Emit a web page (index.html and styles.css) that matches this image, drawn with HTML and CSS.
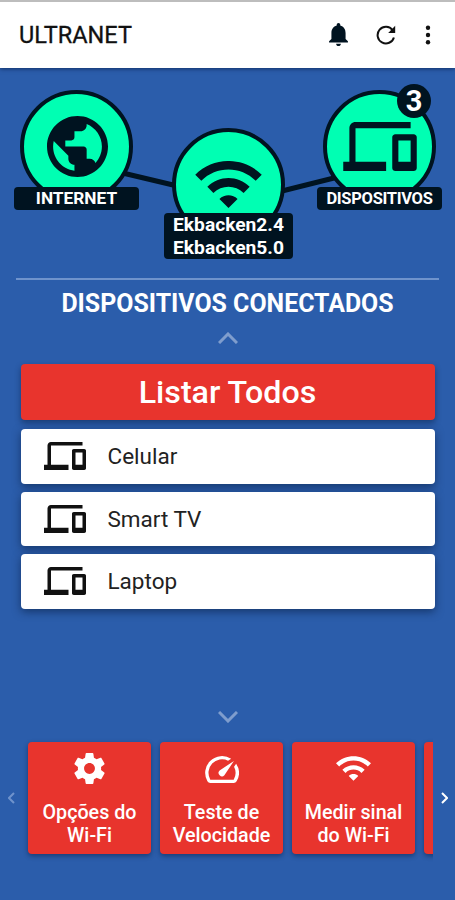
FILE: index.html
```
<!DOCTYPE html>
<html lang="pt-BR">
  <head>
    <meta charset="UTF-8" />
    <meta name="viewport" content="width=device-width, initial-scale=1.0" />
    <title>ULTRANET</title>
    <link rel="stylesheet" href="styles.css">
  </head>
  <body>
    <!-- shared icons -->
    <svg class="defs" width="0" height="0">
      <symbol id="devices" viewBox="0 4 24 16">
        <path d="M4 6h18V4H4c-1.1 0-2 .9-2 2v11H0v3h14v-3H4V6zm19 2h-6c-.55 0-1 .45-1 1v10c0 .55.45 1 1 1h6c.55 0 1-.45 1-1V9c0-.55-.45-1-1-1zm-1 9h-4v-7h4v7z" />
      </symbol>
      <symbol id="wifi" viewBox="1 4.45 22 15.55">
        <path d="M1 9l2 2c4.97-4.97 13.03-4.97 18 0l2-2C16.93 2.93 7.08 2.93 1 9zm8 8l3 3 3-3c-1.65-1.66-4.34-1.66-6 0zm-4-4l2 2c2.76-2.76 7.24-2.76 10 0l2-2C15.14 9.14 8.87 9.14 5 13z" />
      </symbol>
    </svg>

    <header class="topbar">
      <h1>ULTRANET</h1>
      <svg class="icon-bell" viewBox="4 2.5 16 19.5">
        <path d="M12 22c1.1 0 2-.9 2-2h-4c0 1.1.89 2 2 2zm6-6v-5c0-3.07-1.64-5.64-4.5-6.32V4c0-.83-.67-1.5-1.5-1.5s-1.5.67-1.5 1.5v.68C7.63 5.36 6 7.92 6 11v5l-2 2v1h16v-1l-2-2z" />
      </svg>
      <svg class="icon-refresh" viewBox="0 0 20 20">
        <path class="arc" d="M16.6 5.2A8.3 8.3 0 1 0 17.9 12.4" />
        <path d="M19.2 0.8V7.9H12.2z" />
      </svg>
      <svg class="icon-more" viewBox="0 0 6 20">
        <circle cx="3" cy="2.8" r="2.2" />
        <circle cx="3" cy="10" r="2.2" />
        <circle cx="3" cy="17.2" r="2.2" />
      </svg>
    </header>

    <main>
      <section class="network">
        <svg class="links" viewBox="0 0 455 211">
          <path d="M110 102L190 121M270 126L350 106" />
        </svg>
        <div class="node internet">
          <div class="circle">
            <svg class="icon-globe" viewBox="2 2 20 20">
              <path d="M12 2C6.48 2 2 6.48 2 12s4.48 10 10 10 10-4.48 10-10S17.52 2 12 2zm-1 17.93c-3.95-.49-7-3.85-7-7.93 0-.62.08-1.21.21-1.79L9 15v1c0 1.1.9 2 2 2v1.93zm6.9-2.54c-.26-.81-1-1.39-1.9-1.39h-1v-3c0-.55-.45-1-1-1H8v-2h2c.55 0 1-.45 1-1V7h2c1.1 0 2-.9 2-2v-.41c2.93 1.19 5 4.06 5 7.41 0 2.08-.8 3.97-2.1 5.39z" />
            </svg>
          </div>
          <div class="label">INTERNET</div>
        </div>
        <div class="node router">
          <div class="circle">
            <svg class="icon-wifi"><use href="#wifi" /></svg>
          </div>
          <div class="label">Ekbacken2.4<br />Ekbacken5.0</div>
        </div>
        <div class="node clients">
          <div class="circle">
            <svg class="icon-devices"><use href="#devices" /></svg>
          </div>
          <div class="label">DISPOSITIVOS</div>
          <span class="badge">3</span>
        </div>
      </section>

      <section class="connected">
        <h2>DISPOSITIVOS CONECTADOS</h2>
        <svg class="chevron" viewBox="0 0 20 12"><path d="M1 11L10 2L19 11" /></svg>
        <div class="list">
          <button class="list-all">Listar Todos</button>
          <div class="device"><svg><use href="#devices" /></svg><span>Celular</span></div>
          <div class="device"><svg><use href="#devices" /></svg><span>Smart TV</span></div>
          <div class="device"><svg><use href="#devices" /></svg><span>Laptop</span></div>
        </div>
        <svg class="chevron" viewBox="0 0 20 12"><path d="M1 1L10 10L19 1" /></svg>
      </section>

      <nav class="actions">
        <svg class="arrow prev" viewBox="0 0 7 12"><path d="M6 1L1 6L6 11" /></svg>
        <div class="track">
          <div class="card">
            <svg class="gear" viewBox="2 2 20 20">
              <path d="M19.43 12.98c.04-.32.07-.64.07-.98s-.03-.66-.07-.98l2.11-1.65c.19-.15.24-.42.12-.64l-2-3.46c-.12-.22-.39-.3-.61-.22l-2.49 1c-.52-.4-1.08-.73-1.69-.98l-.38-2.65C14.46 2.18 14.25 2 14 2h-4c-.25 0-.46.18-.49.42l-.38 2.65c-.61.25-1.17.59-1.69.98l-2.49-1c-.23-.09-.49 0-.61.22l-2 3.46c-.13.22-.07.49.12.64l2.11 1.65c-.04.32-.07.65-.07.98s.03.66.07.98l-2.11 1.65c-.19.15-.24.42-.12.64l2 3.46c.12.22.39.3.61.22l2.49-1c.52.4 1.08.73 1.69.98l.38 2.65c.03.24.24.42.49.42h4c.25 0 .46-.18.49-.42l.38-2.65c.61-.25 1.17-.59 1.69-.98l2.49 1c.23.09.49 0 .61-.22l2-3.46c.12-.22.07-.49-.12-.64l-2.11-1.65zM12 15.5c-1.93 0-3.5-1.57-3.5-3.5s1.57-3.5 3.5-3.5 3.5 1.57 3.5 3.5-1.57 3.5-3.5 3.5z" />
            </svg>
            <span>Opções do<br />Wi-Fi</span>
          </div>
          <div class="card">
            <svg class="speed" viewBox="2 4 20 16">
              <path d="M20.38 8.57l-1.23 1.85a8 8 0 0 1-.22 7.58H5.07A8 8 0 0 1 15.58 6.85l1.85-1.23A10 10 0 0 0 3.35 19a2 2 0 0 0 1.72 1h13.85a2 2 0 0 0 1.74-1 10 10 0 0 0-.27-10.44zm-9.79 6.84a2 2 0 0 0 2.83 0l5.66-8.49-8.49 5.66a2 2 0 0 0 0 2.83z" />
            </svg>
            <span>Teste de<br />Velocidade</span>
          </div>
          <div class="card">
            <svg class="signal"><use href="#wifi" /></svg>
            <span>Medir sinal<br />do Wi-Fi</span>
          </div>
          <div class="card"></div>
        </div>
        <svg class="arrow next" viewBox="0 0 7 12"><path d="M1 1L6 6L1 11" /></svg>
      </nav>
    </main>
  </body>
</html>
```

FILE: styles.css
```
* {
  box-sizing: border-box;
}
body {
  margin: 0;
  height: 900px;
  overflow: hidden;
  background: #2b5dab;
  font-family: Roboto, sans-serif;
  color: #fff;
}
svg {
  display: block;
  flex: none;
}
.defs {
  display: none;
}
h1,
h2 {
  margin: 0;
}

.topbar {
  position: relative;
  display: flex;
  align-items: center;
  height: 68px;
  padding: 0 24px 1px 19px;
  border-top: 2px solid #bdbdbd;
  background: #fff;
  box-shadow: 0 1px 4px rgba(0, 20, 60, 0.6);
  color: #111;
}
.topbar h1 {
  flex: 1;
  font-size: 23.5px;
  font-weight: 400;
  -webkit-text-stroke: 0.3px #111;
}
.icon-bell {
  width: 19px;
  height: 23px;
  fill: #001320;
}
.icon-refresh {
  width: 20px;
  height: 20px;
  margin: 0 29px 0 28px;
  fill: #111;
}
.icon-refresh .arc {
  fill: none;
  stroke: #111;
  stroke-width: 2;
}
.icon-more {
  width: 6px;
  height: 20px;
  fill: #111;
}

.network {
  position: relative;
  height: 210px;
}
.links {
  position: absolute;
  top: 0;
  left: 0;
  width: 455px;
  height: 211px;
  stroke: #001320;
  stroke-width: 5;
}
.node {
  position: absolute;
  display: flex;
  flex-direction: column;
  align-items: center;
}
.internet {
  left: 14px;
  top: 22px;
}
.router {
  left: 164px;
  top: 60px;
}
.clients {
  left: 317px;
  top: 22px;
}
.circle {
  display: flex;
  align-items: center;
  justify-content: center;
  width: 113px;
  height: 113px;
  border: 4px solid #001320;
  border-radius: 50%;
  background: #00ffb3;
}
.label {
  width: 125px;
  height: 23px;
  margin-top: -16px;
  border-radius: 4px;
  background: #001320;
  font-size: 17.3px;
  font-weight: 700;
  line-height: 23px;
  text-align: center;
}
.router .label {
  width: 129px;
  height: 46px;
  margin-top: -28px;
  font-size: 19.2px;
}
.clients .label {
  font-size: 16.5px;
  letter-spacing: -0.3px;
}
.badge {
  position: absolute;
  top: -6px;
  right: 11px;
  width: 34px;
  height: 34px;
  border-radius: 50%;
  background: #001320;
  font-size: 29px;
  font-weight: 700;
  line-height: 34px;
  text-align: center;
}
.icon-globe {
  width: 61px;
  height: 61px;
  margin-left: 1px;
}
.icon-wifi {
  width: 67px;
  height: 47px;
}
.icon-devices {
  width: 74px;
  height: 49px;
}
.node svg {
  fill: #001320;
}

.connected {
  display: flex;
  flex-direction: column;
  align-items: center;
  height: 456px;
  margin: 0 16px;
  padding-top: 9px;
  border-top: 2px solid #6f93cc;
}
.connected h2 {
  font-size: 24.9px;
  font-weight: 700;
  line-height: 30px;
}
.chevron {
  width: 20px;
  height: 12px;
  margin-top: 13px;
  fill: none;
  stroke: #7f9dcd;
  stroke-width: 3;
}
.list {
  display: flex;
  flex-direction: column;
  gap: 8px;
  width: 414px;
  height: 334px;
  margin-top: 20px;
}
.list-all {
  height: 56px;
  margin-bottom: 1px;
  padding: 0;
  border: 0;
  border-radius: 4px;
  background: #e8342d;
  box-shadow: 0 3px 6px rgba(0, 20, 50, 0.45);
  color: #fff;
  font-family: inherit;
  font-size: 32.2px;
  font-weight: 500;
}
.device {
  display: flex;
  align-items: center;
  gap: 22px;
  height: 54.5px;
  padding-left: 23px;
  border-radius: 4px;
  background: #fff;
  box-shadow: 0 3px 8px rgba(0, 20, 50, 0.5);
  color: #222;
  font-size: 22.5px;
}
.device svg {
  width: 42px;
  height: 28px;
  fill: #111;
}

.actions {
  display: flex;
  align-items: center;
  height: 128px;
  padding: 0 7px 0 8px;
}
.arrow {
  width: 7px;
  height: 12px;
  fill: none;
  stroke: #fff;
  stroke-width: 2;
}
.prev {
  stroke: #6f93cc;
}
.track {
  display: flex;
  flex: 1;
  gap: 9px;
  margin: 0 8px 0 5px;
  padding: 8px 0 8px 8px;
  overflow: hidden;
}
.card {
  display: flex;
  flex: none;
  flex-direction: column;
  align-items: center;
  justify-content: space-between;
  width: 123px;
  height: 112px;
  padding: 11px 0 7px;
  border-radius: 4px;
  background: #e8342d;
  box-shadow: 0 2px 5px rgba(0, 20, 50, 0.45);
  font-size: 19.7px;
  font-weight: 500;
  line-height: 23px;
  text-align: center;
}
.card svg {
  fill: #fff;
}
.gear {
  width: 31px;
  height: 31px;
}
.speed {
  width: 34px;
  height: 27px;
  margin-top: 3px;
}
.signal {
  width: 35px;
  height: 25px;
  margin-top: 3px;
}
```
